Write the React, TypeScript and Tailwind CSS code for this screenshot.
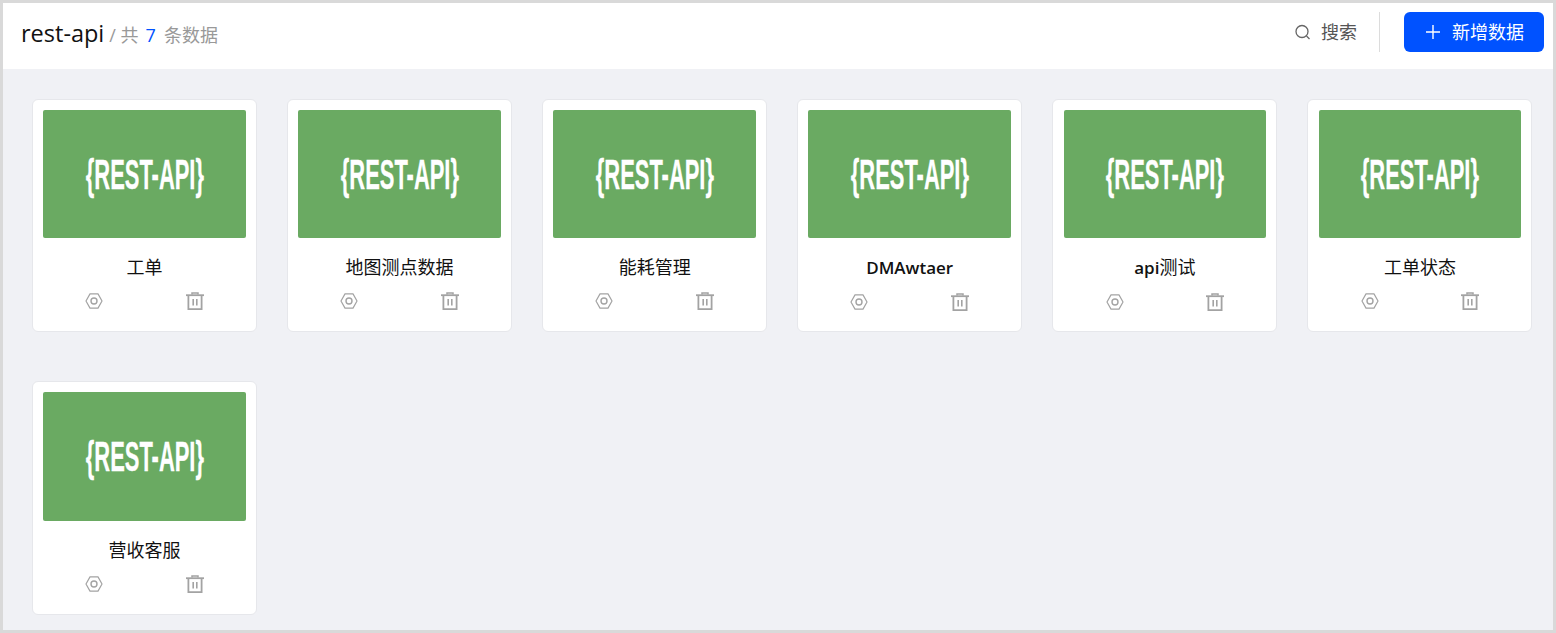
const items = ["工单", "地图测点数据", "能耗管理", "DMAwtaer", "api测试", "工单状态", "营收客服"];

function IconNut() {
  return (
    <svg width="18" height="18" viewBox="0 0 18 18" fill="none" stroke="#a3a3a3" strokeWidth="1.2">
      <path d="M5 1.9h8l4 7.1-4 7.1H5L1 9z" strokeLinejoin="round" />
      <circle cx="9" cy="9" r="3" strokeWidth="1.4" />
    </svg>
  );
}

function IconTrash() {
  return (
    <svg width="18" height="18" viewBox="0 0 18 18" fill="none" stroke="#a3a3a3" strokeWidth="1.8">
      <path d="M0 3.2h18" />
      <path d="M6 2.6V1h6v1.6" strokeWidth="1.5" />
      <path d="M2.4 3.2v14h13.2v-14" />
      <path d="M7.2 7v6.5M10.8 7v6.5" strokeWidth="1.6" />
    </svg>
  );
}

function Card({ name }: { name: string }) {
  // latin part of the name is heavier than the CJK part in the design
  const parts = name.split(/([A-Za-z]+)/);
  return (
    <div className="flex h-[233.4px] flex-col rounded-md border border-[#e6e7eb] bg-white px-[10.2px] pt-[10px]">
      <div className="flex h-[128.4px] items-center justify-center overflow-hidden rounded-[2px] bg-[#6aaa62]">
        <span className="scale-x-[0.51] font-['Liberation_Sans',sans-serif] text-[43px] leading-none font-bold whitespace-nowrap text-white [-webkit-text-stroke:0.3px_white]">
          {"{REST-API}"}
        </span>
      </div>
      <p className="mt-[17px] text-center text-lg leading-[24px] text-[#111]">
        {parts.map((part, i) =>
          i % 2 === 1 ? (
            <span key={i} className="text-[17px] font-semibold">
              {part}
            </span>
          ) : (
            part
          ),
        )}
      </p>
      <div className="mt-[13px] flex justify-between pr-[42px] pl-[42px]">
        <IconNut />
        <IconTrash />
      </div>
    </div>
  );
}

export default function App() {
  return (
    <div className="h-[633px] w-[1556px] overflow-hidden border-[3px] border-[#d9d9d9] bg-[#f0f1f5] font-['Open_Sans','Noto_Sans_CJK_SC',sans-serif]">
      <header className="flex h-[66px] items-center justify-between bg-white pr-[9px] pl-[18px]">
        <div className="mb-[5px] flex items-baseline">
          <h1 className="text-[23.5px] leading-none text-[#111]">rest-api</h1>
          <span className="ml-[5px] text-lg leading-none text-[#999]">/ 共</span>
          <span className="mr-[8px] ml-[7px] text-lg leading-none text-[#0052ff]">7</span>
          <span className="text-lg leading-none text-[#999]">条数据</span>
        </div>
        <div className="mb-[8px] flex items-center">
          <svg width="17" height="17" viewBox="0 0 17 17" fill="none" stroke="#666" strokeWidth="1.3">
            <circle cx="8" cy="7.5" r="6" />
            <path d="M12.5 12l3 3" />
          </svg>
          <span className="ml-[10px] text-lg leading-none text-[#555]">搜索</span>
          <div className="mr-[24px] ml-[22px] h-10 w-px bg-[#dcdcdc]" />
          <button type="button" className="flex h-10 w-[140px] items-center rounded-md bg-[#0052ff] pl-[22px] text-lg leading-none text-white">
            <svg width="14" height="14" viewBox="0 0 14 14" stroke="#fff" strokeWidth="1.4">
              <path d="M0 7h14M7 0v14" />
            </svg>
            <span className="ml-[12px]">新增数据</span>
          </button>
        </div>
      </header>
      <main className="grid grid-cols-[repeat(6,225px)] gap-x-[30.08px] gap-y-[49px] pt-[30px] pl-[29px]">
        {items.map((name) => (
          <Card key={name} name={name} />
        ))}
      </main>
    </div>
  );
}
